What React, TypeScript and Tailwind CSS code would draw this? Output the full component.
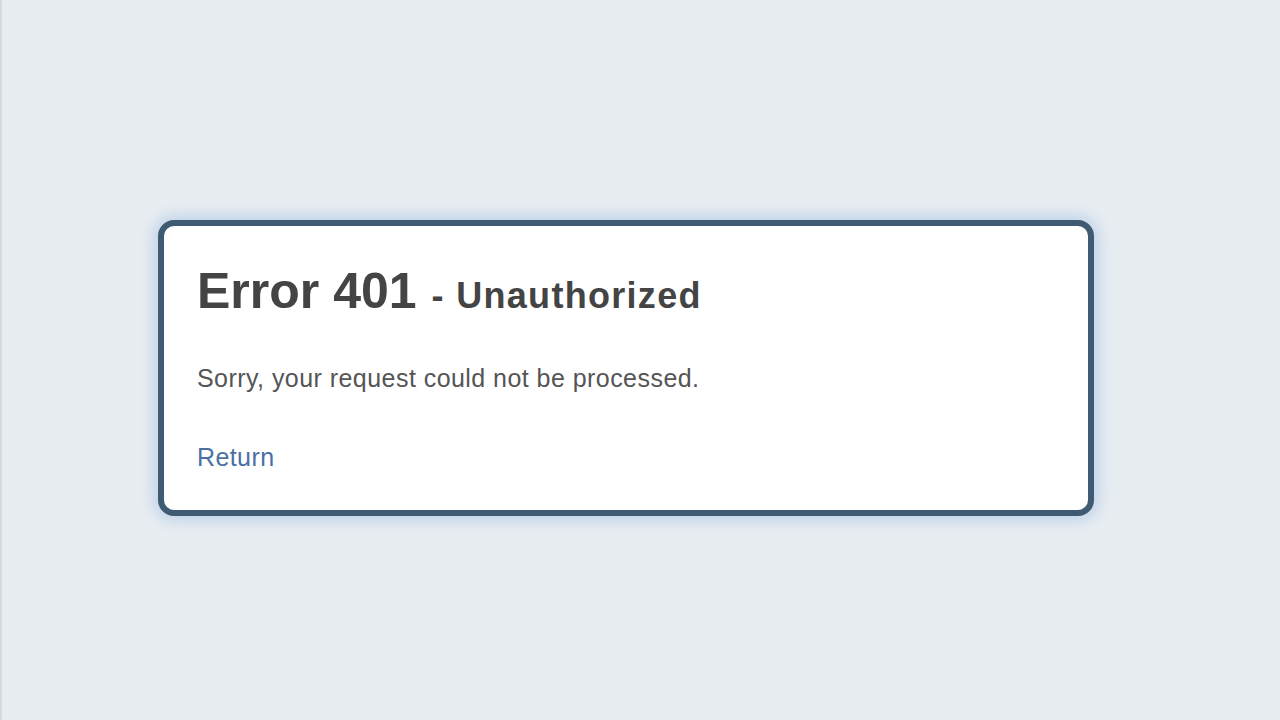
import React from "react";

export default function App() {
  return (
    <div
      className="w-[1280px] h-[720px] bg-[#e8edf2] border-l-2 border-[#d3dae2] pt-[220px] pl-[156px]"
      style={{ fontFamily: '"Liberation Sans", Arial, sans-serif' }}
    >
      <div className="w-[936px] h-[296px] bg-white border-[6px] border-[#3e5b73] rounded-[16px] shadow-[0_0_14px_5px_rgba(160,192,225,0.55)] pl-[33px] pt-[40px]">
        <h1 className="text-[#444444] font-bold leading-none flex items-baseline">
          <span className="text-[50px]">Error 401</span>
          <span className="text-[36px] ml-[15px] tracking-[1.3px]">- Unauthorized</span>
        </h1>
        <p className="text-[#555555] text-[25px] leading-none mt-[50px] tracking-[0.45px]">
          Sorry, your request could not be processed.
        </p>
        <a className="block text-[#4c6fa3] text-[25px] leading-none mt-[54px] tracking-[0.4px]">Return</a>
      </div>
    </div>
  );
}
